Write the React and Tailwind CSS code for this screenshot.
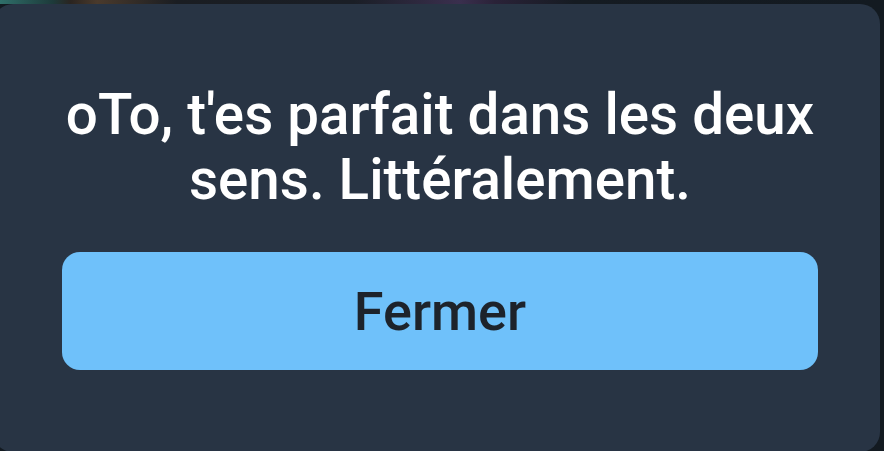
export default function App() {
  return (
    <div className="h-[451px] w-[884px] overflow-hidden bg-[#131a21] font-['Roboto',sans-serif]">
      <div className="h-[4px] w-full bg-[linear-gradient(90deg,#2f6f6a_0%,#1d3a3a_6%,#2a2420_8%,#4a3a2c_11%,#1a1d22_20%,#1a1e26_40%,#3a2f4e_52%,#2a2238_56%,#151b22_65%,#131a21_100%)]" />
      <div className="ml-[-7px] flex h-[448px] w-[887px] flex-col rounded-[20px] bg-[#283444] pl-[69px] pr-[62px] pt-[79px]">
        <p className="text-center text-[56.5px] font-medium leading-[65px] text-white">
          oTo, t'es parfait dans les deux sens. Littéralement.
        </p>
        <button className="mt-[39px] flex h-[118px] w-full items-center justify-center rounded-[18px] bg-[#6fc1fa] text-[54px] font-medium text-[#1d232b]">
          Fermer
        </button>
      </div>
    </div>
  );
}
